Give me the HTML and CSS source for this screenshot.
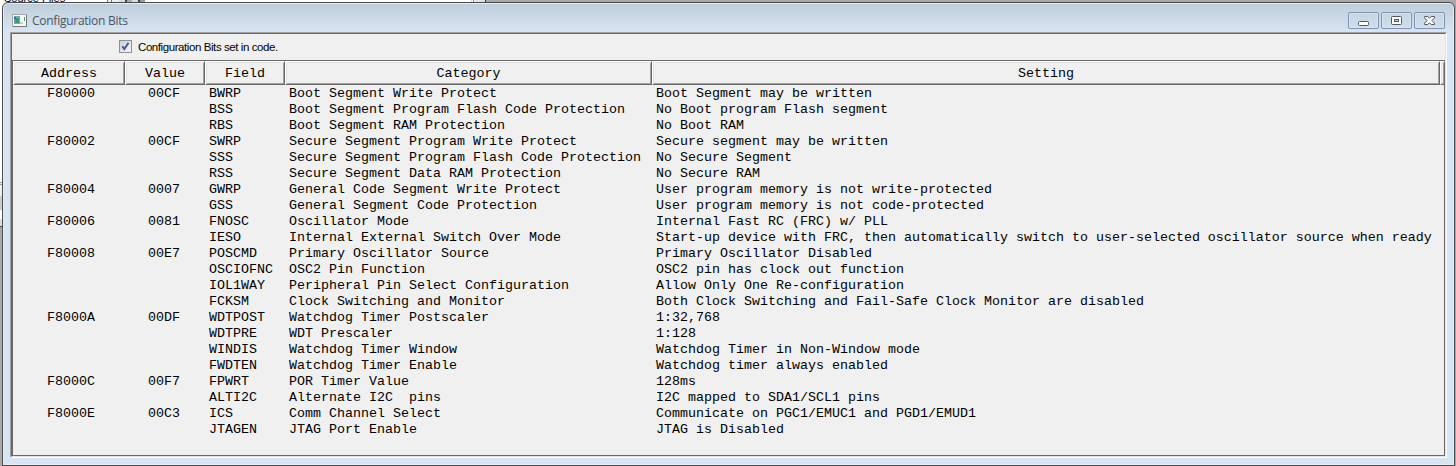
FILE: index.html
```
<!DOCTYPE html>
<html lang="en">
<head>
<meta charset="utf-8">
<title>Configuration Bits</title>
<link rel="stylesheet" href="styles.css">
</head>
<body>
<div class="desktop">
  <div class="behind-top"><span class="behind-label">Source Files</span><span class="behind-divider"></span><span class="behind-page"></span><span class="behind-edge"></span></div>
  <div class="behind-left"></div>
  <main class="window">
    <header class="titlebar">
      <svg class="app-icon" width="15" height="13" viewBox="0 0 15 13" shape-rendering="crispEdges">
        <path fill="#a5a8ab" d="M0 0h15v13H0z"/><path fill="#f8f8f8" d="M1 1h13v11H1z"/>
        <path fill="#72a9bd" d="M2 2h6v8H2z"/><path fill="#3e967b" d="M3 4h4v5H3z"/><path fill="#3c6790" d="M2 3h2v2H2z"/>
        <path fill="#c7cbc9" d="M8 8h3v2H8z"/><path fill="#479a6c" d="M12 3h1v4h-1z"/><path fill="#777" d="M14 1h1v12H1v-1h13z"/>
      </svg>
      <h1 class="title">Configuration Bits</h1>
      <div class="controls">
        <span class="control"><svg width="29" height="15" viewBox="0 0 29 15"><rect x="9.5" y="8.5" width="10" height="4" rx="1" fill="#fff" stroke="#535666"/></svg></span>
        <span class="control"><svg width="29" height="15" viewBox="0 0 29 15"><rect x="9.5" y="3.5" width="10" height="8" rx="1" fill="#fff" stroke="#535666"/><rect x="12.5" y="6.5" width="4" height="2" fill="#c5d3e1" stroke="#535666"/></svg></span>
        <span class="control"><svg width="29" height="15" viewBox="0 0 29 15"><path d="M9.5 3.5h3.3l1.7 1.8 1.7-1.8h3.3v1.3L16.9 7.5l2.6 2.7v1.3h-3.3l-1.7-1.8-1.7 1.8H9.5v-1.3l2.6-2.7-2.6-2.7z" fill="#fff" stroke="#535666"/></svg></span>
      </div>
    </header>
    <section class="client">
      <div class="panel">
        <div class="option">
          <span class="checkbox"><svg width="9" height="9" viewBox="0 0 9 9"><path d="M1.3 4.2 3.3 7 7.5.8" fill="none" stroke="#3e5590" stroke-width="1.9"/></svg></span>
          <span class="option-label">Configuration Bits set in code.</span>
        </div>
        <div class="grid head">
          <span>Address</span><span>Value</span><span>Field</span><span>Category</span><span>Setting</span><span></span>
        </div>
        <div class="body" id="rows"></div>
      </div>
    </section>
  </main>
</div>
<script src="rows.js"></script>
</body>
</html>
```
FILE: styles.css
```
* { box-sizing: border-box; }
body { margin: 0; overflow: hidden; }
.desktop {
  position: relative;
  width: 1456px;
  height: 466px;
  padding: 2px 1px 0 2px;
  background: #a9a9a9;
  overflow: hidden;
}
.behind-top {
  position: absolute;
  left: 0;
  top: 0;
  width: 486px;
  height: 8px;
  display: flex;
  background: #fff;
  overflow: hidden;
}
.behind-label {
  width: 107px;
  padding-left: 4px;
  font: 11px/12px "Liberation Sans", sans-serif;
  margin-top: -8px;
  white-space: nowrap;
}
.behind-divider {
  width: 39px;
  background: linear-gradient(90deg, #777 1px, #eee 1px 4px, #777 4px 5px, #eee 5px 12px, #cfe0ef 12px 18px, #444 18px 20px, #aaa 20px 25px, #cfe0ef 25px 31px, #444 31px 33px, #999 33px 38px, #fff 38px);
}
.behind-page { width: 325px; }
.behind-edge {
  width: 15px;
  background: linear-gradient(90deg, #ddd 1px, #fff 1px 2px, #888 2px 3px, #eee 3px 5px, #d8e6f2 5px 14px, #333 14px);
}
.behind-left {
  position: absolute;
  left: 0;
  top: 8px;
  width: 3px;
  height: 458px;
  background: linear-gradient(#fff 174px, #999 174px 175px, #eee 175px 176px, #999 176px 177px, #f0f0f0 177px 188px, #ccc 188px 202px, #fff 202px 211px, #d0e2ee 211px 218px, #444 218px 219px, #a9a9a9 219px);
}
.window {
  position: relative;
  width: 1453px;
  height: 464px;
  padding: 1px 7px 0;
  border: 1px solid #4b4b4b;
  border-radius: 6px 6px 0 0;
  background: linear-gradient(#bfccd9, #d7e4f1 29px, #d7e4f1);
  box-shadow: inset 0 0 0 1px #e4edf6;
}
.titlebar {
  display: flex;
  height: 28px;
  padding: 10px 2px 0 2px;
}
.app-icon { flex: none; }
.title {
  width: 100px;
  margin: -2px 0 0 5px;
  color: #4a5563;
  font: 400 12px/17px "Open Sans", sans-serif;
  letter-spacing: -0.26px;
  white-space: nowrap;
}
.controls {
  display: flex;
  gap: 2px;
  margin: -2px 0 0 auto;
}
.control {
  width: 31px;
  height: 17px;
  border: 1px solid #8291b1;
  border-radius: 2px;
  background: linear-gradient(#c7d4e1, #d0deeb);
  box-shadow: inset 0 0 0 1px #d8e4ef;
}
.control svg { display: block; }
.client {
  width: 1437px;
  height: 426px;
  border: 1px solid #a0a0a0;
  border-right-color: #fff;
  border-bottom-color: #fff;
}
.panel {
  width: 1435px;
  height: 424px;
  border: 1px solid #696969;
  border-right-color: #e3e3e3;
  border-bottom-color: #e3e3e3;
  background: #f0f0f0;
}
.option {
  display: flex;
  height: 26px;
  padding: 6px 0 0 107px;
}
.checkbox {
  display: flex;
  flex: none;
  width: 13px;
  height: 13px;
  padding: 1px;
  border: 1px solid #8e8f8f;
  background: linear-gradient(135deg, #cbcfd5, #f6f6f6);
}
.option-label {
  margin-left: 6px;
  color: #000;
  font: 11.5px/14px "Liberation Sans", sans-serif;
  letter-spacing: -0.42px;
  white-space: nowrap;
}
.grid {
  display: grid;
  grid-template-columns: 112px 80px 80px 367px 788px 5px;
}
.head, .body {
  color: #000;
  font-family: "Liberation Mono", "Courier New", monospace;
  font-size: 13.33px;
}
.head {
  height: 25px;
  border-top: 1px solid #696969;
  border-left: 1px solid #696969;
  line-height: 23px;
  text-align: center;
}
.head span {
  height: 24px;
  border: 1px solid #fff;
  border-right-color: #696969;
  border-bottom-color: #696969;
  box-shadow: inset 1px 1px #e3e3e3, inset -1px -1px #a0a0a0;
}
.body {
  height: 371px;
  border: solid #696969;
  border-width: 0 1px 1px;
}
.row {
  height: 16px;
  line-height: 17px;
  white-space: pre;
}
.row span { padding-left: 4px; }
.row .address { padding-left: 34px; }
.row .value { padding-left: 23px; }
```
FILE: rows.js
```
const rows = [
  ["F80000", "00CF", "BWRP", "Boot Segment Write Protect", "Boot Segment may be written"],
  ["", "", "BSS", "Boot Segment Program Flash Code Protection", "No Boot program Flash segment"],
  ["", "", "RBS", "Boot Segment RAM Protection", "No Boot RAM"],
  ["F80002", "00CF", "SWRP", "Secure Segment Program Write Protect", "Secure segment may be written"],
  ["", "", "SSS", "Secure Segment Program Flash Code Protection", "No Secure Segment"],
  ["", "", "RSS", "Secure Segment Data RAM Protection", "No Secure RAM"],
  ["F80004", "0007", "GWRP", "General Code Segment Write Protect", "User program memory is not write-protected"],
  ["", "", "GSS", "General Segment Code Protection", "User program memory is not code-protected"],
  ["F80006", "0081", "FNOSC", "Oscillator Mode", "Internal Fast RC (FRC) w/ PLL"],
  ["", "", "IESO", "Internal External Switch Over Mode", "Start-up device with FRC, then automatically switch to user-selected oscillator source when ready"],
  ["F80008", "00E7", "POSCMD", "Primary Oscillator Source", "Primary Oscillator Disabled"],
  ["", "", "OSCIOFNC", "OSC2 Pin Function", "OSC2 pin has clock out function"],
  ["", "", "IOL1WAY", "Peripheral Pin Select Configuration", "Allow Only One Re-configuration"],
  ["", "", "FCKSM", "Clock Switching and Monitor", "Both Clock Switching and Fail-Safe Clock Monitor are disabled"],
  ["F8000A", "00DF", "WDTPOST", "Watchdog Timer Postscaler", "1:32,768"],
  ["", "", "WDTPRE", "WDT Prescaler", "1:128"],
  ["", "", "WINDIS", "Watchdog Timer Window", "Watchdog Timer in Non-Window mode"],
  ["", "", "FWDTEN", "Watchdog Timer Enable", "Watchdog timer always enabled"],
  ["F8000C", "00F7", "FPWRT", "POR Timer Value", "128ms"],
  ["", "", "ALTI2C", "Alternate I2C  pins", "I2C mapped to SDA1/SCL1 pins"],
  ["F8000E", "00C3", "ICS", "Comm Channel Select", "Communicate on PGC1/EMUC1 and PGD1/EMUD1"],
  ["", "", "JTAGEN", "JTAG Port Enable", "JTAG is Disabled"]
];
const body = document.getElementById("rows");
for (const values of rows) {
  const row = document.createElement("div");
  row.className = "grid row";
  values.forEach((value, index) => {
    const cell = document.createElement("span");
    if (index === 0) cell.className = "address";
    if (index === 1) cell.className = "value";
    cell.textContent = value;
    row.append(cell);
  });
  body.append(row);
}
```
